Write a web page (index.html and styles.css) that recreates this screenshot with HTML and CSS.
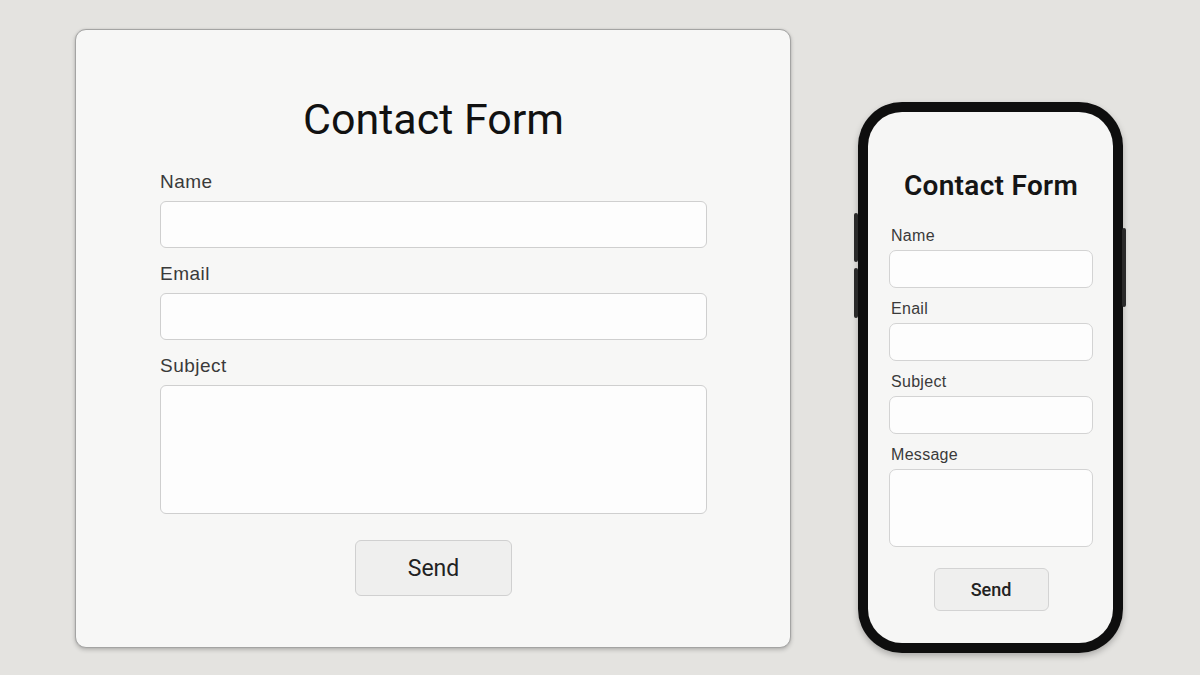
FILE: index.html
```html
<!DOCTYPE html>
<html lang="en">
<head>
<meta charset="utf-8">
<title>Contact Form</title>
<link rel="stylesheet" href="styles.css">
</head>
<body>
<main class="stage">
  <section class="card">
    <h1 class="card-title">Contact Form</h1>
    <form class="form">
      <label class="label">Name</label>
      <div class="field"></div>
      <label class="label">Email</label>
      <div class="field"></div>
      <label class="label">Subject</label>
      <div class="field area"></div>
      <div class="actions"><button type="button" class="btn">Send</button></div>
    </form>
  </section>
  <section class="phone">
    <span class="side side-l1"></span>
    <span class="side side-l2"></span>
    <span class="side side-r"></span>
    <div class="screen">
      <h2 class="m-title">Contact Form</h2>
      <label class="m-label">Name</label>
      <div class="m-field"></div>
      <label class="m-label">Enail</label>
      <div class="m-field"></div>
      <label class="m-label">Subject</label>
      <div class="m-field"></div>
      <label class="m-label">Message</label>
      <div class="m-field m-area"></div>
      <div class="actions"><button type="button" class="m-btn">Send</button></div>
    </div>
  </section>
</main>
</body>
</html>
```

FILE: styles.css
```css
* { box-sizing: border-box; }
html, body { margin: 0; padding: 0; }
body {
  width: 1200px;
  height: 675px;
  overflow: hidden;
  background: #e4e3e0;
  font-family: "Liberation Sans", Arial, sans-serif;
}
.stage {
  display: flex;
  align-items: flex-start;
  padding: 29px 0 0 75px;
  gap: 67px;
}
.card {
  width: 716px;
  height: 619px;
  background: #f7f7f6;
  border: 1.5px solid #a4a4a3;
  border-radius: 11px;
  box-shadow: 0 2px 4px rgba(0,0,0,0.2), 0 0 2px rgba(0,0,0,0.1);
  padding: 64px 83px 0 84px;
}
.card-title {
  margin: 0;
  text-align: center;
  font-family: Roboto, "Liberation Sans", sans-serif;
  font-weight: 400;
  font-size: 43px;
  line-height: 50px;
  color: #111;
}
.form {
  display: flex;
  flex-direction: column;
  margin-top: 27px;
}
.label {
  font-size: 19px;
  letter-spacing: 0.5px;
  line-height: 22px;
  color: #3a3a3a;
  margin-bottom: 8px;
}
.field {
  height: 47px;
  background: #fdfdfd;
  border: 1.5px solid #cfcfcf;
  border-radius: 6px;
  margin-bottom: 15px;
}
.field.area {
  height: 129px;
  margin-bottom: 26px;
}
.actions {
  display: flex;
  justify-content: center;
}
.btn {
  width: 157px;
  height: 56px;
  background: #efefee;
  border: 1.5px solid #d0d0d0;
  border-radius: 6px;
  font-family: Roboto, "Liberation Sans", sans-serif;
  font-size: 23px;
  color: #222;
  padding: 0;
}
.phone {
  position: relative;
  margin-top: 73px;
  width: 265px;
  height: 551px;
  background: #0e0e0e;
  border-radius: 44px;
  padding: 10px;
  box-shadow: 0 3px 6px rgba(0,0,0,0.25);
}
.side {
  position: absolute;
  width: 4px;
  background: #2a2a2a;
  border-radius: 2px;
}
.side-l1 { left: -4px; top: 111px; height: 49px; }
.side-l2 { left: -4px; top: 166px; height: 50px; }
.side-r { right: -3px; top: 126px; height: 79px; }
.screen {
  height: 100%;
  background: #f6f6f5;
  border-radius: 34px;
  padding: 57px 20px 0 21px;
  display: flex;
  flex-direction: column;
}
.m-title {
  margin: 0 0 24px;
  text-align: center;
  font-family: Roboto, "Liberation Sans", sans-serif;
  font-weight: 600;
  font-size: 28px;
  letter-spacing: 0.3px;
  line-height: 34px;
  color: #151515;
}
.m-label {
  font-size: 16px;
  letter-spacing: 0.3px;
  line-height: 18px;
  color: #3a3a3a;
  margin: 0 0 5px 2px;
}
.m-field {
  height: 38px;
  background: #fdfdfd;
  border: 1.5px solid #d3d3d3;
  border-radius: 7px;
  margin-bottom: 12px;
}
.m-field.m-area {
  height: 78px;
  margin-bottom: 21px;
}
.m-btn {
  width: 115px;
  height: 43px;
  background: #efefee;
  border: 1.5px solid #d3d3d3;
  border-radius: 6px;
  font-family: Roboto, "Liberation Sans", sans-serif;
  font-size: 18px;
  font-weight: 500;
  color: #222;
  padding: 0;
}
```
